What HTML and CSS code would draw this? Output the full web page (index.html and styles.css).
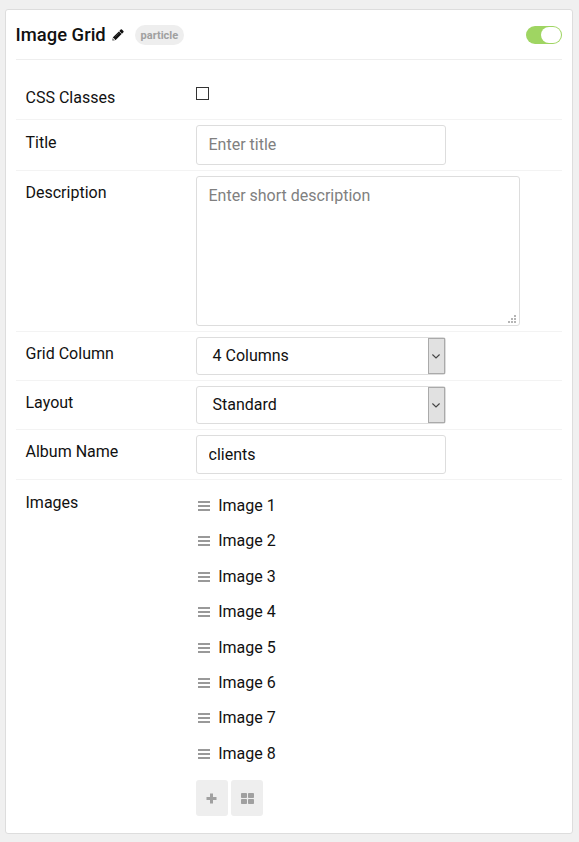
FILE: index.html
```html
<!DOCTYPE html>
<html lang="en">
<head>
<meta charset="utf-8">
<title>Image Grid</title>
<link rel="stylesheet" href="styles.css">
</head>
<body>
<main class="card">
  <header class="head">
    <h1 class="title">Image Grid</h1>
    <svg class="pencil" width="12" height="12" viewBox="0 0 12 12"><path fill="#111" d="M.4 11.6 1 8.3 6.9 2.4 9.6 5.1 3.7 11ZM7.3 2 8.7.6Q9.3 0 9.9.6L11.4 2.1Q12 2.7 11.4 3.3L10 4.7Z"/><path d="M1.6 8.9v1.5h1.5" stroke="#fff" stroke-width=".9" fill="none"/><path d="M3.4 7.8 7 4.2" stroke="#777" stroke-width=".5"/></svg>
    <span class="badge">particle</span>
    <span class="toggle"><span class="knob"></span></span>
  </header>
  <div class="row row-check"><label class="label">CSS Classes</label><input class="check" type="checkbox"></div>
  <div class="row row-title"><label class="label">Title</label><input class="field" type="text" placeholder="Enter title"></div>
  <div class="row"><label class="label">Description</label>
    <div class="area-wrap"><textarea class="field area" placeholder="Enter short description"></textarea>
      <svg class="grip" width="8" height="8" viewBox="0 0 8 8" fill="#b5b5b5"><path d="M6 0h2v2H6zM3 3h2v2H3zM6 3h2v2H6zM0 6h2v2H0zM3 6h2v2H3zM6 6h2v2H6z"/></svg></div></div>
  <div class="row"><label class="label">Grid Column</label>
    <div class="select"><span>4 Columns</span><span class="drop"><svg width="8" height="5" viewBox="0 0 8 5"><path d="M.4.5 4 4 7.6.5" fill="none" stroke="#444" stroke-width="1.1"/></svg></span></div></div>
  <div class="row"><label class="label">Layout</label>
    <div class="select"><span>Standard</span><span class="drop"><svg width="8" height="5" viewBox="0 0 8 5"><path d="M.4.5 4 4 7.6.5" fill="none" stroke="#444" stroke-width="1.1"/></svg></span></div></div>
  <div class="row"><label class="label">Album Name</label><input class="field album" type="text" value="clients"></div>
  <div class="row row-images"><span class="label">Images</span>
    <div>
      <ul class="list">
        <li><i class="bars"></i>Image 1</li>
        <li><i class="bars"></i>Image 2</li>
        <li><i class="bars"></i>Image 3</li>
        <li><i class="bars"></i>Image 4</li>
        <li><i class="bars"></i>Image 5</li>
        <li><i class="bars"></i>Image 6</li>
        <li><i class="bars"></i>Image 7</li>
        <li><i class="bars"></i>Image 8</li>
      </ul>
      <div class="actions">
        <button class="btn" aria-label="Add"><svg class="plus" width="11" height="11" viewBox="0 0 11 11"><path fill="#a0a0a0" d="M4 .5h3V4h3.500v3H7v3.500H4V7H.5V4H4z"/></svg></button>
        <button class="btn" aria-label="Grid"><svg width="13" height="11" viewBox="0 0 13 11" fill="#a0a0a0"><rect width="6" height="5" rx=".8"/><rect x="7" width="6" height="5" rx=".8"/><rect y="6" width="6" height="5" rx=".8"/><rect x="7" y="6" width="6" height="5" rx=".8"/></svg></button>
      </div>
    </div>
  </div>
</main>
</body>
</html>
```
FILE: styles.css
```css
* { box-sizing: border-box; }
body {
  margin: 0;
  padding: 9px 6px 8px 5px;
  background: #f0f0f0;
  color: #111;
  font: 16px/24px Roboto, sans-serif;
}
.card {
  height: 825px;
  padding: 0 10px;
  background: #fff;
  border: 1px solid #ddd;
  border-radius: 3px;
}
.head {
  display: flex;
  align-items: center;
  height: 50px;
  border-bottom: 1px solid #eee;
}
.title { width: 88px; margin: 0 0 0 -.4px; font-size: 18.4px; font-weight: 500; line-height: 24px; white-space: nowrap; }
.pencil { margin: 1px 0 0 8px; }
.badge {
  height: 20px;
  margin-left: 11px;
  padding: 0 6px;
  border-radius: 10px;
  background: #eee;
  color: #a0a0a0;
  font-size: 11px;
  font-weight: 700;
  line-height: 21px;
}
.toggle {
  display: flex;
  justify-content: flex-end;
  width: 36px;
  height: 18px;
  margin-left: auto;
  padding: 1px;
  border-radius: 9px;
  background: #9fd562;
}
.knob { width: 20px; height: 16px; border-radius: 8px; background: #fff; }
.row {
  display: flex;
  align-items: flex-start;
  padding: 5px 0;
  border-bottom: 1px solid #f3f3f3;
}
.label { width: 180px; padding: 5px 0 0 9.5px; }
.row-check { height: 60px; padding-top: 21px; }
.row-title .label { padding-top: 6px; }
.check {
  appearance: none;
  width: 13px;
  height: 13px;
  margin: 6px 0 0;
  border: 1px solid #333;
  background: #fff;
}
.field, .select {
  width: 250px;
  border: 1px solid #ddd;
  border-radius: 3px;
  background: #fff;
  color: #111;
  font: 16px/24px Roboto, sans-serif;
}
.field { display: block; height: 40px; margin: 0; padding: 0 11.5px 1px; }
.field::placeholder { color: #808080; opacity: 1; }
.album { height: 39px; padding-bottom: 0; }
.area-wrap { position: relative; }
.area { width: 324px; height: 150px; padding-top: 7px; resize: none; }
.grip { position: absolute; right: 4px; bottom: 3px; }
.select {
  display: flex;
  align-items: center;
  justify-content: space-between;
  height: 38px;
  padding-left: 15.5px;
}
.drop {
  display: flex;
  align-items: center;
  justify-content: center;
  width: 17px;
  height: 36px;
  padding-right: 1px;
  border: 1px solid #aaa;
  background: #e1e1e1;
}
.row-images { padding-top: 8px; border: 0; }
.row-images .label { padding-top: 3px; }
.list { margin: 0; padding: .4px 0 0; list-style: none; }
.list li { display: flex; align-items: center; height: 35.4px; }
.bars {
  width: 12px;
  height: 10px;
  margin: 0 8.2px 0 2px;
  background: repeating-linear-gradient(#999 0 2px, #fff 2px 4px);
}
.actions { display: flex; gap: 3px; margin-top: 8.4px; }
.btn {
  display: flex;
  align-items: center;
  justify-content: center;
  width: 32px;
  height: 36px;
  padding: 2px 0 0;
  border: 0;
  border-radius: 3px;
  background: #eee;
}
.plus { margin-right: 1px; }
```
